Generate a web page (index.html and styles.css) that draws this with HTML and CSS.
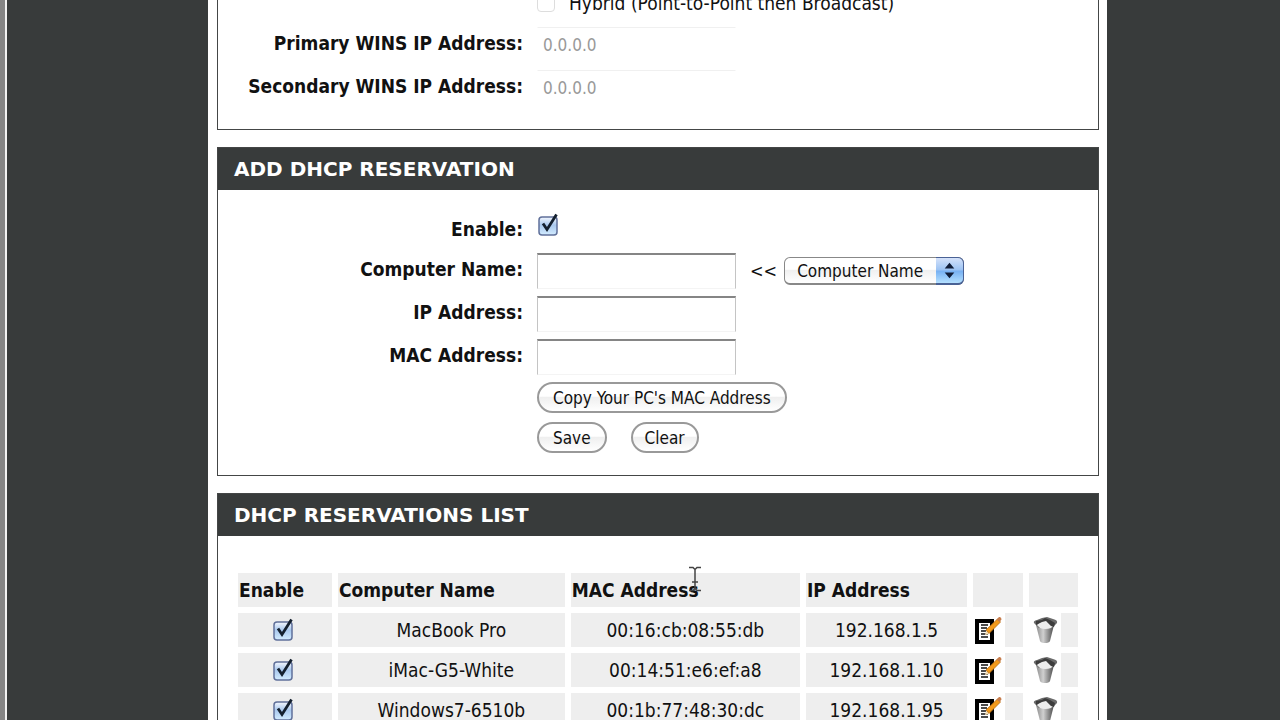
FILE: index.html
```html
<!DOCTYPE html>
<html lang="en">
<head>
<meta charset="utf-8">
<title>DHCP Reservations</title>
<link rel="stylesheet" href="styles.css">
</head>
<body>
<svg class="sprite" aria-hidden="true">
  <defs>
    <linearGradient id="g-box" x1="0" y1="0" x2="0" y2="1"><stop offset="0" stop-color="#f4f8ff"/><stop offset=".45" stop-color="#a9c8ee"/><stop offset="1" stop-color="#d3ecff"/></linearGradient>
    <linearGradient id="g-can" x1="0" y1="0" x2="1" y2="0"><stop offset="0" stop-color="#8a8a8a"/><stop offset=".4" stop-color="#d0d0d0"/><stop offset=".7" stop-color="#8c8c8c"/><stop offset="1" stop-color="#4a4a4a"/></linearGradient>
  </defs>
  <symbol id="tick" viewBox="0 0 22 24">
    <rect x="2" y="4" width="18" height="18" rx="3" fill="url(#g-box)" stroke="#60709a" stroke-width="1.5"/>
    <path d="M6 10.500l4 6L19.500 1.500" fill="none" stroke="#14202f" stroke-width="2.800"/>
  </symbol>
  <symbol id="edit" viewBox="0 0 32 34">
    <path d="M2 6h19v25H2z" fill="#000"/><path d="M6 10h11v17H6z" fill="#fff"/>
    <path d="M8 12h7M8 15h6M8 18h5M8 21h7M8 24h7" stroke="#111" stroke-width="1.500"/>
    <path d="M13 18l-1 4 4-1z" fill="#f5e0b5"/>
    <path d="M13 17L24.500 6l3 3L16 20.500z" fill="#f39a1b" stroke="#b56a10" stroke-width=".8"/>
    <path d="M23.500 6.500L26 4q2.500-.5 2.500 2.500l-2 2.500z" fill="#c77d4d"/>
  </symbol>
  <symbol id="trash" viewBox="0 0 32 34">
    <path d="M7 12l4 16q1 2 5 2t5-2l4-16z" fill="url(#g-can)"/>
    <path d="M5 10q-1-2 3-3l5-2 5-1 6 2q5 1 4 4l-3 3-2 2h-13l-2-2z" fill="#6a6a6a"/>
    <path d="M8 12l3-3 6-2.500 6 3.500 2 2-3 3q-6 2-11 0z" fill="#ececec"/>
    <path d="M7 8l6-1 3-2 5 2 5 3-1 4-3-1-5-5-4 1-6 3z" fill="#3c3c3c"/>
  </symbol>
</svg>
<div class="shell">
  <div class="edge"></div>
  <main class="page">
    <section class="panel">
      <div class="form wins">
        <div class="row">
          <span class="label"></span>
          <label class="radio"><input type="radio" name="node" disabled> Hybrid (Point-to-Point then Broadcast)</label>
        </div>
        <div class="row">
          <label class="label" for="wins1">Primary WINS IP Address:</label>
          <input class="text faded" id="wins1" type="text" value="0.0.0.0" disabled>
        </div>
        <div class="row">
          <label class="label" for="wins2">Secondary WINS IP Address:</label>
          <input class="text faded" id="wins2" type="text" value="0.0.0.0" disabled>
        </div>
      </div>
    </section>

    <section class="panel">
      <h2>ADD DHCP RESERVATION</h2>
      <form class="form">
        <div class="row check-row">
          <label class="label" for="enable">Enable:</label>
          <span class="check"><input id="enable" type="checkbox" checked><svg><use href="#tick"/></svg></span>
        </div>
        <div class="row">
          <label class="label" for="name">Computer Name:</label>
          <input class="text" id="name" type="text">
          <span class="copy">&lt;&lt;</span>
          <span class="picker">
            <select aria-label="Computer Name"><option>Computer Name</option></select>
            <svg viewBox="0 0 28 26"><path d="M9 11l5-6 5 6zM9 15l5 6 5-6z" fill="#101d38"/></svg>
          </span>
        </div>
        <div class="row">
          <label class="label" for="ip">IP Address:</label>
          <input class="text" id="ip" type="text">
        </div>
        <div class="row">
          <label class="label" for="mac">MAC Address:</label>
          <input class="text" id="mac" type="text">
        </div>
        <div class="row button-row">
          <span class="label"></span>
          <button type="button">Copy Your PC's MAC Address</button>
        </div>
        <div class="row button-row">
          <span class="label"></span>
          <button type="button">Save</button>
          <button class="clear" type="button">Clear</button>
        </div>
      </form>
    </section>

    <section class="panel">
      <h2>DHCP RESERVATIONS LIST</h2>
      <div class="list">
        <table>
          <colgroup><col class="c-enable"><col class="c-name"><col class="c-mac"><col class="c-ip"><col class="c-icon"><col class="c-icon"></colgroup>
          <thead>
            <tr><th>Enable</th><th>Computer Name</th><th>MAC Address</th><th>IP Address</th><th></th><th></th></tr>
          </thead>
          <tbody>
            <tr>
              <td><span class="check"><input type="checkbox" aria-label="Enable MacBook Pro" checked><svg><use href="#tick"/></svg></span></td>
              <td>MacBook Pro</td><td>00:16:cb:08:55:db</td><td>192.168.1.5</td>
              <td class="icon"><button type="button" aria-label="Edit"><svg><use href="#edit"/></svg></button></td>
              <td class="icon"><button type="button" aria-label="Delete"><svg><use href="#trash"/></svg></button></td>
            </tr>
            <tr>
              <td><span class="check"><input type="checkbox" aria-label="Enable iMac-G5-White" checked><svg><use href="#tick"/></svg></span></td>
              <td>iMac-G5-White</td><td>00:14:51:e6:ef:a8</td><td>192.168.1.10</td>
              <td class="icon"><button type="button" aria-label="Edit"><svg><use href="#edit"/></svg></button></td>
              <td class="icon"><button type="button" aria-label="Delete"><svg><use href="#trash"/></svg></button></td>
            </tr>
            <tr>
              <td><span class="check"><input type="checkbox" aria-label="Enable Windows7-6510b" checked><svg><use href="#tick"/></svg></span></td>
              <td>Windows7-6510b</td><td>00:1b:77:48:30:dc</td><td>192.168.1.95</td>
              <td class="icon"><button type="button" aria-label="Edit"><svg><use href="#edit"/></svg></button></td>
              <td class="icon"><button type="button" aria-label="Delete"><svg><use href="#trash"/></svg></button></td>
            </tr>
          </tbody>
        </table>
      </div>
    </section>
  </main>
</div>
<svg class="cursor" viewBox="0 0 14 26" aria-hidden="true"><path d="M1 1.500h4l2 2 2-2h4M7 3v20M4 16h6M1 24.500h4l2-2 2 2h4" fill="none" stroke="#444" stroke-width="1.500"/></svg>
</body>
</html>
```
FILE: styles.css
```css
* { box-sizing: border-box; }
body {
  margin: 0;
  height: 100vh;
  overflow: hidden;
  background: #383b3b;
  color: #111;
  font: 19px/24px "DejaVu Sans Condensed", "Noto Sans", sans-serif;
}
input, select, button { font: inherit; font-size: 17px; color: inherit; margin: 0; }
.sprite { position: absolute; width: 0; height: 0; }
.shell {
  display: grid;
  grid-template-columns: 7px minmax(0, 201fr) minmax(0, 899fr) minmax(0, 173fr);
  min-height: 100vh;
}
.edge { background: #858585; border-right: 2px solid #f2f2f2; }
.page {
  grid-column: 3;
  display: flex;
  flex-direction: column;
  gap: 17px;
  margin-top: -35px;
  padding: 0 8px 0 9px;
  background: #fff;
}
.panel { border: 1px solid #444646; }
h2 {
  margin: 0;
  padding: 9px 16px;
  background: #383b3b;
  color: #fff;
  font: bold 20px/24px "DejaVu Sans", sans-serif;
}
.form {
  display: flex;
  flex-direction: column;
  gap: 7px;
  padding: 21px 0 20px;
}
.form.wins { padding: 19px 0 23px; }
.row { display: flex; align-items: center; min-height: 35px; }
.label {
  flex: 0 0 305px;
  margin-right: 14px;
  padding-bottom: 5px;
  text-align: right;
  font-weight: bold;
}
.check-row .label { padding: 0; }
.check-row .check { margin-bottom: 8px; }
.button-row { min-height: 33px; align-items: flex-start; }
.radio { display: flex; align-items: center; gap: 14px; }
.radio input {
  appearance: none;
  width: 18px;
  height: 18px;
  border: 1px solid #ddd;
  border-radius: 4px;
}
.text {
  width: 199px;
  height: 36px;
  padding: 0 5px;
  border: 1px solid #c4c4c4;
  border-top: 2px solid #858585;
  border-bottom-color: #f4f4f4;
  background: #fff;
}
.text.faded { border-color: #f0f0f0 #fff #fff; border-top-width: 1px; color: #999; }
.copy { margin: 0 7px 0 14px; font-size: 18px; }
.picker { position: relative; display: flex; }
.picker select {
  appearance: none;
  width: 180px;
  height: 28px;
  padding: 0 12px;
  border: 1px solid #888;
  border-bottom-width: 2px;
  border-radius: 6px;
  background: linear-gradient(#fff, #fff 45%, #f0f0f0 50%, #fff);
}
.picker svg {
  position: absolute;
  top: 0;
  right: 0;
  width: 28px;
  height: 28px;
  border: 1px solid #4a6295;
  border-left: 0;
  border-bottom-width: 2px;
  border-radius: 0 6px 6px 0;
  background: linear-gradient(#d5e2fa, #9cc3f3 48%, #76b0f2 52%, #b4e0ff);
  pointer-events: none;
}
.button-row button {
  height: 31px;
  padding: 0 14px;
  border: 2px solid #999;
  border-radius: 16px;
  background: linear-gradient(#fff, #fff 45%, #efefef 50%, #fff);
  line-height: 24px;
}
.button-row .clear { margin-left: 24px; padding: 0 12px; }
.check { position: relative; display: inline-flex; width: 22px; height: 24px; vertical-align: middle; }
.check input { appearance: none; width: 100%; height: 100%; }
.check svg { position: absolute; inset: 0; width: 100%; height: 100%; pointer-events: none; }
.list { padding: 31px 14px; }
table { width: 100%; table-layout: fixed; border-spacing: 6px; }
.c-enable { width: 11.6%; }
.c-name { width: 28%; }
.c-mac { width: 28.3%; }
.c-ip { width: 19.9%; }
.c-icon { width: 6.1%; }
th, td { height: 34px; padding: 0; background: #eee; text-align: center; }
th { padding-left: 1px; text-align: left; }
td:first-child .check { margin: -4px 4px 0 0; }
.icon { text-align: left; }
.icon button { display: block; padding: 0; border: 0; background: #fff; }
.icon svg { display: block; width: 32px; height: 34px; }
.cursor { position: absolute; left: 688px; top: 566px; width: 14px; height: 26px; }
```
